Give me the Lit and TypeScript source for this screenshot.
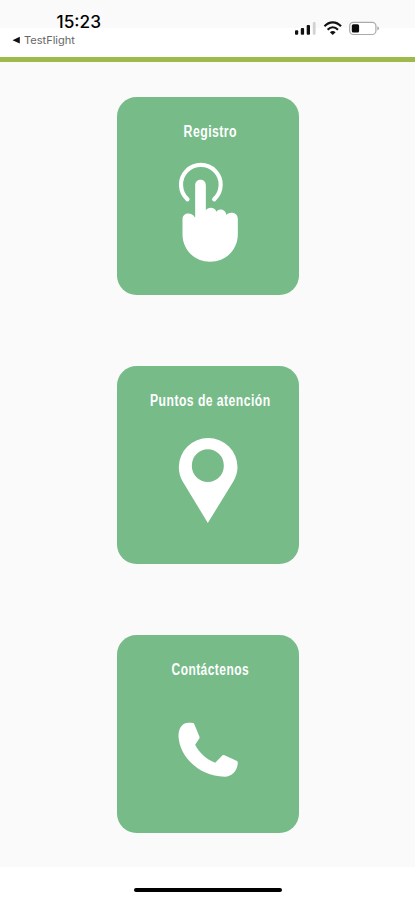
import { LitElement, html, svg, css, SVGTemplateResult } from "lit";
import { customElement, property } from "lit/decorators.js";

type IconName = "touch" | "pin" | "phone";

const icons: Record<IconName, { viewBox: string; art: SVGTemplateResult }> = {
  touch: {
    viewBox: "-6.5 0 270 360",
    art: svg`
      <path d="M67 148 A59.5 59.5 0 1 1 147 148" fill="none" stroke="#fff" stroke-width="12.5" stroke-linecap="round"/>
      <path fill="#fff" d="M90 203 V106 C90 84 122 84 122 106 V181 C127 171 149 169 154 185 C160 175 180 176 184 195 C192 184 218 186 218 207 V252 C218 300 182 335 135 335 C88 335 52 300 52 252 V207 C52 188 79 184 90 203 Z"/>`,
  },
  pin: {
    viewBox: "-6.5 -18 270 360",
    art: svg`<path fill="#fff" fill-rule="evenodd" d="M128 294 L53 170 C45 156 41 143 41 126 A88 87 0 0 1 217 126 C217 143 212 156 204 170 Z M128 73 A48 49 0 1 0 128 171 A48 49 0 1 0 128 73 Z"/>`,
  },
  phone: {
    viewBox: "-6.5 -66 270 360",
    art: svg`<path fill="#fff" d="M57 41 C65 37 75 38 84 39 Q87 40 88 44 L103 80 Q104 83 102 86 L90 104 C102 128 124 148 150 158 L170 138 Q173 134 178 136 L214 152 Q218 154 218 158 C217 180 202 200 178 200 C104 199 43 142 40 79 C40 62 45 48 57 41 Z"/>`,
  },
};

@customElement("status-bar")
export class StatusBar extends LitElement {
  static styles = css`
    :host {
      display: flex;
      justify-content: space-between;
      box-sizing: border-box;
      height: 57px;
      background: linear-gradient(#fafafa 0 28px, #fff 28px);
      font-family: Inter, "Liberation Sans", sans-serif;
      color: #111;
    }
    .left { display: block; width: 140px; height: 57px; }
    .right { display: block; width: 140px; height: 57px; }
    .time { font-size: 16.8px; font-weight: 500; }
    .back { font-size: 10.5px; fill: #666; }
  `;
  render() {
    return html`
      <svg class="left" viewBox="0 0 140 57">
        <text class="time" x="56.5" y="27.6" textLength="44.5" lengthAdjust="spacingAndGlyphs">15:23</text>
        <path d="M12.5 40.2 L19.8 36.8 V43.6 Z" fill="#111" />
        <text class="back" x="24" y="44.3" textLength="51" lengthAdjust="spacingAndGlyphs">TestFlight</text>
      </svg>
      <svg class="right" viewBox="0 0 140 57">
        <g fill="#111">
          <rect x="20" y="30.3" width="3.2" height="4.4" rx="1" />
          <rect x="25.8" y="28" width="3.3" height="6.7" rx="1" />
          <rect x="31.7" y="25" width="3.3" height="9.7" rx="1" />
          <rect x="37.8" y="22" width="2.8" height="12.7" rx="1" fill="#d2d2d2" />
        </g>
        <g fill="none" stroke="#111" stroke-width="2.1">
          <path d="M49.5 26.3 C54.2 21.1 61.3 21.1 66 26.3" />
          <path d="M52.6 29.7 C55.8 26.5 59.8 26.5 63 29.7" />
        </g>
        <path d="M54.9 32.2 Q57.7 29.8 60.6 32.2 L57.75 34.9 Z" fill="#111" />
        <rect x="74.7" y="22.3" width="26.2" height="12.2" rx="3.6" fill="#fff" stroke="#aaa" stroke-width="1.2" />
        <rect x="76.8" y="24.2" width="7.3" height="8.4" rx="1.6" fill="#0a0a0a" />
        <path d="M102.3 26.2 Q106 28.4 102.3 30.6 Z" fill="#aaa" />
      </svg>
    `;
  }
}

@customElement("menu-card")
export class MenuCard extends LitElement {
  @property() label = "";
  @property({ type: Number }) textWidth = 60;
  @property() icon: IconName = "touch";

  static styles = css`
    :host {
      display: flex;
      flex-direction: column;
      align-items: center;
      box-sizing: border-box;
      width: 182px;
      height: 197.5px;
      margin-left: 1px;
      padding-top: 22px;
      border-radius: 19.5px;
      background: #77bb89;
    }
    .label {
      display: block;
      width: 182px;
      height: 24px;
      margin-bottom: 7px;
      overflow: visible;
    }
    .label text {
      font: bold 16px "Liberation Sans Narrow", "Liberation Sans", sans-serif;
      letter-spacing: 0.6px;
      fill: #fff;
    }
    .icon { display: block; width: 90px; height: 120px; }
  `;
  render() {
    const { viewBox, art } = icons[this.icon];
    return html`
      <svg class="label" viewBox="0 0 182 24">
        <text
          x=${93.3 - this.textWidth / 2}
          y="18.4"
          textLength=${this.textWidth}
          lengthAdjust="spacingAndGlyphs"
        >${this.label}</text>
      </svg>
      <svg class="icon" viewBox=${viewBox}>${art}</svg>
    `;
  }
}

@customElement("app-root")
export class AppRoot extends LitElement {
  static styles = css`
    :host {
      display: flex;
      flex-direction: column;
      height: 900px;
      background: #fafafa;
    }
    .rule { height: 4.5px; flex: none; background: #9dba4b; }
    .menu {
      flex: 1;
      display: flex;
      flex-direction: column;
      align-items: center;
      gap: 71.5px;
      padding-top: 35.5px;
    }
    .home {
      flex: none;
      display: flex;
      justify-content: center;
      box-sizing: border-box;
      height: 33px;
      padding-top: 21px;
      background: #fff;
    }
    .indicator { width: 148px; height: 4px; border-radius: 2px; background: #000; }
  `;
  render() {
    return html`
      <status-bar></status-bar>
      <div class="rule"></div>
      <div class="menu">
        <menu-card label="Registro" .textWidth=${53.5} icon="touch"></menu-card>
        <menu-card label="Puntos de atención" .textWidth=${120.5} icon="pin"></menu-card>
        <menu-card label="Contáctenos" .textWidth=${77.5} icon="phone"></menu-card>
      </div>
      <div class="home"><div class="indicator"></div></div>
    `;
  }
}
